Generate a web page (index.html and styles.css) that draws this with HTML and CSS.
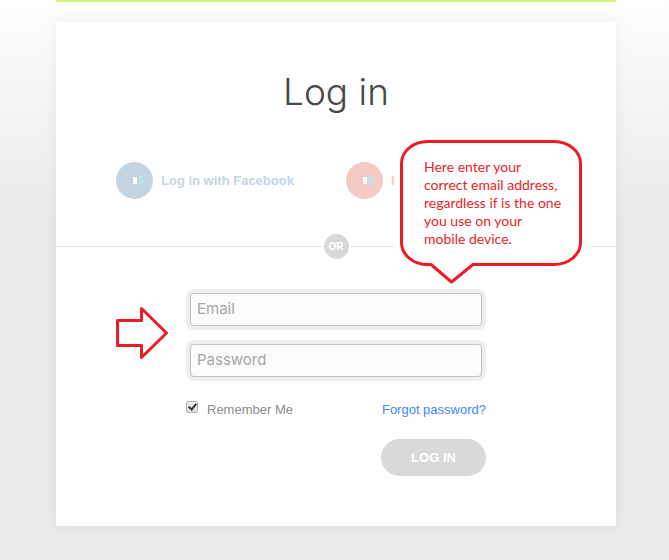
FILE: index.html
```html
<!DOCTYPE html>
<html lang="en">
<head>
  <meta charset="UTF-8">
  <meta name="viewport" content="width=device-width, initial-scale=1">
  <title>Log in</title>
  <link rel="stylesheet" href="styles.css">
</head>
<body>
  <div class="page">
    <div class="top-bar"></div>

    <main class="card">
      <h1>Log in</h1>

      <div class="social">
        <a class="social-link facebook" href="#">
          <span class="social-icon">
            <svg width="10" height="9" viewBox="0 0 10 9" aria-hidden="true">
              <rect x="0" y="1" width="4" height="7" fill="#fff"/>
              <rect x="6" y="0" width="4" height="9" fill="#b9e6e8"/>
            </svg>
          </span>
          Log in with Facebook
        </a>
        <a class="social-link google" href="#">
          <span class="social-icon">
            <svg width="10" height="9" viewBox="0 0 10 9" aria-hidden="true">
              <rect x="0" y="1" width="4" height="7" fill="#fff"/>
              <rect x="6" y="0" width="4" height="9" fill="#bfe2e8"/>
            </svg>
          </span>
          I
        </a>
      </div>

      <div class="divider"><span>OR</span></div>

      <form class="login-form">
        <div class="field">
          <input type="email" placeholder="Email" aria-label="Email">
        </div>
        <div class="field">
          <input type="password" placeholder="Password" aria-label="Password">
        </div>
        <div class="options">
          <label class="remember" for="remember">
            <input type="checkbox" id="remember" checked>
            Remember Me
          </label>
          <a href="#">Forgot password?</a>
        </div>
        <button type="submit">LOG IN</button>
      </form>

      <!-- Help callout and arrow -->
      <div class="callout">
        <svg class="bubble" width="196" height="146" viewBox="0 0 196 146" aria-hidden="true">
          <path d="M33.500 3.500H160A26.500 22 0 0 1 186.500 25.500V104.500A26.500 22 0 0 1 160 126.500H79L57.500 144L37 126.500H33.500A26 22 0 0 1 7.500 104.500V25.500A26 22 0 0 1 33.500 3.500Z" fill="#fff" stroke="#ed1c24" stroke-width="3" stroke-linejoin="round"/>
        </svg>
        <p>Here enter your<br>correct email address,<br>regardless if is the one<br>you use on your<br>mobile device.</p>
      </div>
      <svg class="arrow" width="54" height="54" viewBox="0 0 54 54" aria-hidden="true">
        <path d="M2.500 14.500H26.500V2.500L51.500 27L26.500 51.500V39.500H2.500Z" fill="none" stroke="#ed1c24" stroke-width="3" stroke-linejoin="round"/>
      </svg>
    </main>
  </div>
</body>
</html>
```

FILE: styles.css
```css
* {
  box-sizing: border-box;
}
body {
  margin: 0;
  min-height: 100vh;
  background: #eaeaea linear-gradient(#fdfdfd, #eaeaea 220px) no-repeat;
  font-family: "Liberation Sans", Arial, sans-serif;
  font-size: 13px;
  color: #8c8c8c;
}
a {
  color: #4285f4;
  text-decoration: none;
}
.page {
  padding: 0 53px 34px 56px;
}
.top-bar {
  height: 2px;
  margin-bottom: 20px;
  background: #d3f07f;
}
.card {
  position: relative;
  padding: 46px 0 50px;
  background: #fff;
  box-shadow: 0 0 14px rgba(0, 0, 0, 0.06);
}
h1 {
  margin: 0 0 46px;
  font-family: Inter, sans-serif;
  font-size: 37px;
  font-weight: 300;
  line-height: 48px;
  text-align: center;
  color: #484848;
}

/* Social buttons */
.social {
  display: grid;
  grid-template-columns: 230px 1fr;
  padding-left: 60px;
}
.social-link {
  display: flex;
  align-items: center;
  gap: 8px;
  font-weight: bold;
}
.social-icon {
  display: flex;
  align-items: center;
  justify-content: center;
  width: 37px;
  height: 37px;
  padding-left: 7px;
  border-radius: 50%;
}
.facebook {
  color: #c5d5e3;
}
.facebook .social-icon {
  background: #c4d3e0;
}
.google {
  color: #f5c9c4;
}
.google .social-icon {
  background: #f5c9c4;
}

.divider {
  display: flex;
  align-items: center;
  margin: 35px 0 30px;
}
.divider::before,
.divider::after {
  content: "";
  flex: 1;
  height: 1px;
  background: #e8e8e8;
}
.divider span {
  width: 25px;
  height: 25px;
  border-radius: 50%;
  background: #d9d9d9;
  color: #fff;
  font-size: 10px;
  font-weight: bold;
  line-height: 25px;
  text-align: center;
}

/* Form */
.login-form {
  display: flex;
  flex-direction: column;
  width: 300px;
  margin: 0 auto;
}
.field {
  margin-bottom: 10px;
  padding: 4px;
  border-radius: 8px;
  background: #eee;
}
.field input {
  display: block;
  width: 100%;
  height: 33px;
  padding: 0 6px 2px;
  border: 1px solid #c4c4c4;
  border-radius: 4px;
  background: #fbfbfb;
  font-family: Inter, sans-serif;
  font-size: 15px;
  color: #545454;
}
.field input::placeholder {
  color: #a6a6a6;
}
.options {
  display: flex;
  justify-content: space-between;
  align-items: center;
  height: 16px;
  margin: 10px 0 22px;
}
.remember {
  display: flex;
  align-items: center;
  gap: 9px;
}
.remember input {
  appearance: none;
  width: 12px;
  height: 12px;
  margin: 0 0 4px;
  border: 1px solid #b0b0b0;
  border-radius: 2px;
  background: linear-gradient(#eee, #ddd);
}
.remember input:checked::after {
  content: "";
  display: block;
  width: 3px;
  height: 6px;
  margin: 0 0 0 3px;
  border: solid #333;
  border-width: 0 2px 2px 0;
  box-sizing: content-box;
  transform: rotate(40deg);
}
button {
  align-self: flex-end;
  width: 105px;
  height: 37px;
  padding: 0;
  border: none;
  border-radius: 19px;
  background: #d9d9d9;
  color: #fff;
  font-family: inherit;
  font-size: 13px;
  font-weight: bold;
  cursor: pointer;
}

/* Annotations lie over the card */
.callout {
  position: absolute;
  top: 116px;
  left: 338px;
  width: 195px;
  height: 132px;
  background: #fff;
}
.bubble {
  position: absolute;
  top: 0;
  left: 0;
}
.callout p {
  position: relative;
  margin: 0;
  padding: 20px 0 0 30px;
  font-family: Lato, sans-serif;
  font-size: 14px;
  line-height: 18px;
  color: #ed1c24;
  white-space: nowrap;
}
.arrow {
  position: absolute;
  top: 284px;
  left: 59px;
}
```
